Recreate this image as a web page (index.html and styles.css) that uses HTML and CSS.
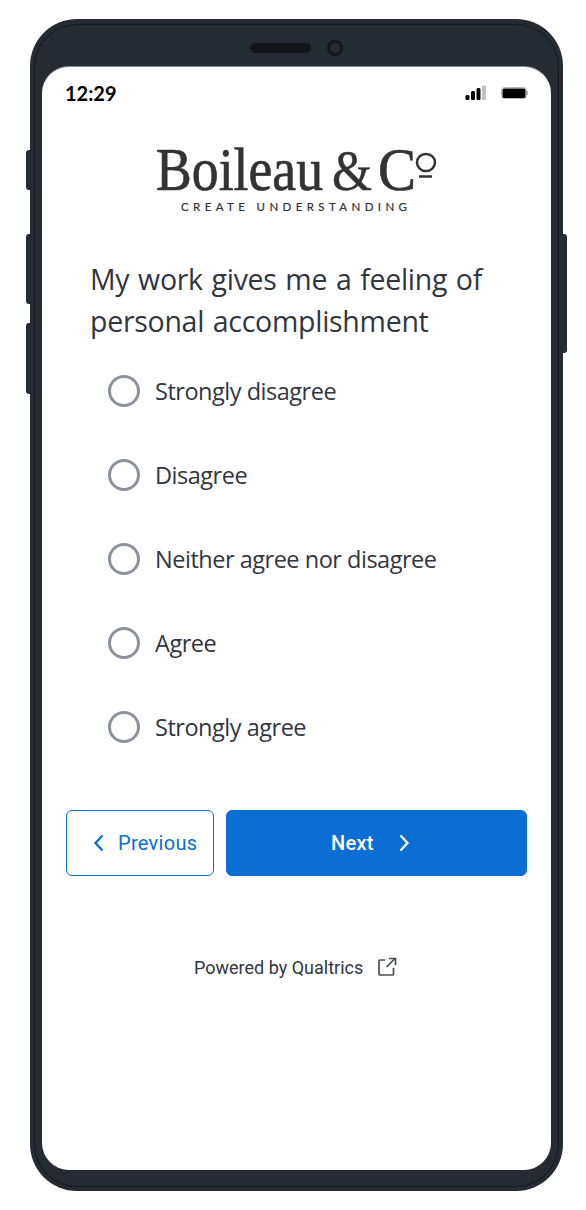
FILE: index.html
```html
<!DOCTYPE html>
<html lang="en">
<head>
  <meta charset="UTF-8">
  <meta name="viewport" content="width=device-width, initial-scale=1.0">
  <title>Survey</title>
  <link rel="stylesheet" href="styles.css">
</head>
<body>
  <div class="phone">
    <!-- Side buttons -->
    <span class="key key-mute"></span>
    <span class="key key-up"></span>
    <span class="key key-down"></span>
    <span class="key key-power"></span>
    <span class="rim"></span>

    <div class="bezel">
      <span class="speaker"></span>
      <span class="camera"></span>
    </div>

    <div class="screen">
      <div class="status">
        <span class="time">12:29</span>
        <svg class="status-icons" width="64" height="18" viewBox="0 0 64 18">
          <rect x="1.5" y="11" width="4" height="5" rx="1.5"/>
          <rect x="7" y="7" width="4" height="9" rx="1.5"/>
          <rect x="12.500" y="4" width="4" height="12" rx="1.5"/>
          <rect x="18" y="1.500" width="4" height="14.500" rx="1" fill="#c2c2c4"/>
          <rect x="37.500" y="3.500" width="25" height="11" rx="3" fill="#fff" stroke="#b4b4b4"/>
          <path d="M63 7v4" stroke="#777" fill="none"/>
          <rect x="38.500" y="4.500" width="23" height="9.500" rx="1.5"/>
        </svg>
      </div>

      <svg class="logo" width="290" height="80" viewBox="0 0 290 80">
        <text class="logo-name" x="4" y="53" textLength="167" lengthAdjust="spacingAndGlyphs">Boileau</text>
        <text class="logo-amp" x="180" y="53" textLength="40" lengthAdjust="spacingAndGlyphs">&amp;</text>
        <text class="logo-name" x="226" y="53" textLength="38" lengthAdjust="spacingAndGlyphs">C</text>
        <ellipse cx="274" cy="25.500" rx="9" ry="8.600"/>
        <path d="M267 39.500h13"/>
        <text class="logo-tag" x="29" y="74" textLength="226">CREATE UNDERSTANDING</text>
      </svg>

      <h1 class="question">My work gives me a feeling of personal accomplishment</h1>

      <ul class="choices">
        <li class="choice"><span class="radio"></span>Strongly disagree</li>
        <li class="choice"><span class="radio"></span>Disagree</li>
        <li class="choice"><span class="radio"></span>Neither agree nor disagree</li>
        <li class="choice"><span class="radio"></span>Agree</li>
        <li class="choice"><span class="radio"></span>Strongly agree</li>
      </ul>

      <div class="buttons">
        <button class="btn previous">
          <svg width="12" height="18" viewBox="0 0 12 18"><path d="M9.500 1.500L2.500 9l7 7.500"/></svg>
          Previous
        </button>
        <button class="btn next">
          Next
          <svg width="12" height="18" viewBox="0 0 12 18"><path d="M2.500 1.500l7 7.500-7 7.500"/></svg>
        </button>
      </div>

      <div class="powered">
        <span>Powered by Qualtrics</span>
        <svg width="20" height="20" viewBox="0 0 20 20"><path d="M8 3H3Q2 3 2 4v13Q2 18 3 18h12.500q1 0 1-1V11M9.500 10L18 1.500M12 1.500H18.500V8"/></svg>
      </div>
    </div>
  </div>
</body>
</html>
```

FILE: styles.css
```css
* {
  box-sizing: border-box;
}
body {
  margin: 0;
  padding: 19px 23px 0 30px;
  height: 1210px;
  background: #fff;
  font-family: "Open Sans", sans-serif;
  color: #32363f;
  overflow: hidden;
}
.phone {
  position: relative;
  width: 533px;
  height: 1172px;
  padding: 0 12px 21px;
  border-radius: 47px;
  background: #242b33;
}
.rim {
  position: absolute;
  inset: 5px 4px 4px;
  border: 1.5px solid #14171c;
  border-radius: 43px;
}
.key {
  position: absolute;
  left: -4px;
  width: 4px;
  background: #242b33;
  border-radius: 3px 0 0 3px;
}
.key-mute { top: 131px; height: 40px; }
.key-up { top: 215px; height: 70px; }
.key-down { top: 304px; height: 71px; }
.key-power {
  left: auto;
  right: -4px;
  top: 215px;
  height: 119px;
  border-radius: 0 3px 3px 0;
}

.bezel {
  display: flex;
  align-items: center;
  height: 47px;
  padding: 10px 0 0 208px;
  gap: 16px;
}
.speaker {
  width: 61px;
  height: 10px;
  border-radius: 5px;
  background: #14161b;
}
.camera {
  width: 16px;
  height: 16px;
  border: 3px solid #14161b;
  border-radius: 50%;
}

.screen {
  position: relative;
  height: 1104px;
  border-top: 1px solid #888b90;
  border-radius: 27px;
  background: #fff;
}
.status {
  display: flex;
  justify-content: space-between;
  height: 70px;
  padding: 17px 23px 0;
}
.time {
  font: bold 20px/18px Lato, sans-serif;
  color: #000;
}
.logo {
  display: block;
  margin-left: 110px;
  fill: #333;
}
.logo-name {
  font-family: "Liberation Serif", serif;
  font-size: 62px;
  stroke: #333;
  stroke-width: 0.7px;
}
.logo-amp {
  font-family: "Liberation Serif", serif;
  font-size: 57px;
  stroke: #333;
  stroke-width: 0.4px;
}
.logo ellipse,
.logo path {
  fill: none;
  stroke: #333;
  stroke-width: 2.5px;
}
.logo-tag {
  font-family: Lato, sans-serif;
  font-size: 11.5px;
  stroke: #333;
  stroke-width: 0.2px;
}

.question {
  margin: 41px 48px 0;
  font-size: 28.5px;
  font-weight: normal;
  line-height: 42px;
  letter-spacing: -0.28px;
  word-spacing: 1.6px;
}
.choices {
  margin: 7px 0 0;
  padding: 0 0 0 66px;
  list-style: none;
}
.choice {
  display: flex;
  align-items: center;
  gap: 15px;
  height: 84px;
  font-size: 23.5px;
  letter-spacing: -0.48px;
}
.radio {
  width: 32px;
  height: 32px;
  border: 3px solid #8b929c;
  border-radius: 50%;
}

.buttons {
  display: flex;
  gap: 12px;
  margin: 41px 24px 0;
}
.btn {
  display: flex;
  align-items: center;
  height: 66px;
  border: 1px solid #0b6ed3;
  border-radius: 6px;
  font: 20px Roboto, sans-serif;
  letter-spacing: 0.3px;
}
.btn svg {
  fill: none;
  stroke: currentColor;
  stroke-width: 2.3px;
}
.previous {
  width: 148px;
  padding: 0 0 0 26px;
  gap: 13px;
  background: #fff;
  color: #0b6ed3;
}
.next {
  flex: 1;
  padding: 0 0 0 104px;
  gap: 24px;
  background: #0b6ed3;
  color: #fff;
  font-weight: 500;
}

.powered {
  display: flex;
  align-items: center;
  gap: 14px;
  margin: 78px 0 0 152px;
  font: 18px/24px Roboto, sans-serif;
}
.powered span {
  padding-top: 2px;
}
.powered svg {
  fill: none;
  stroke: #4a4e55;
  stroke-width: 1.7px;
}
```
